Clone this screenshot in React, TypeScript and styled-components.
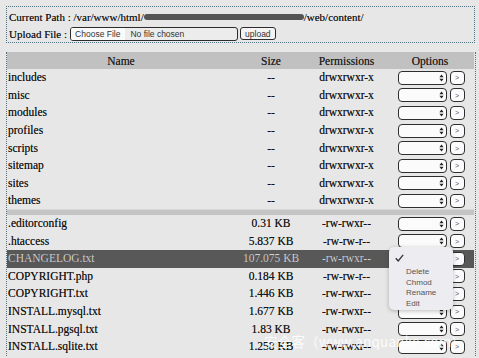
import React from "react";
import styled, { createGlobalStyle } from "styled-components";

const GlobalStyle = createGlobalStyle`
  html, body {
    margin: 0;
    padding: 0;
    background: #e7e7e7;
  }
  body {
    font-family: "Liberation Serif", "Times New Roman", serif;
    font-size: 11.5px;
    color: #141414;
  }
`;

interface Entry {
  name: string;
  size: string;
  perms: string;
}

const dirs: Entry[] = [
  "includes",
  "misc",
  "modules",
  "profiles",
  "scripts",
  "sitemap",
  "sites",
  "themes",
].map((name) => ({ name, size: "--", perms: "drwxrwxr-x" }));

const files: Entry[] = [
  { name: ".editorconfig", size: "0.31 KB", perms: "-rw-rwxr--" },
  { name: ".htaccess", size: "5.837 KB", perms: "-rw-rw-r--" },
  { name: "CHANGELOG.txt", size: "107.075 KB", perms: "-rw-rwxr--" },
  { name: "COPYRIGHT.php", size: "0.184 KB", perms: "-rw-rw-r--" },
  { name: "COPYRIGHT.txt", size: "1.446 KB", perms: "-rw-rwxr--" },
  { name: "INSTALL.mysql.txt", size: "1.677 KB", perms: "-rw-rwxr--" },
  { name: "INSTALL.pgsql.txt", size: "1.83 KB", perms: "-rw-rwxr--" },
  { name: "INSTALL.sqlite.txt", size: "1.258 KB", perms: "-rw-rwxr--" },
];

const Page = styled.div`
  position: relative;
  height: 358px;
  overflow: hidden;
  padding: 6px 4px 0 6px;
  box-sizing: border-box;
  text-shadow: 0 0 0.5px rgba(0, 0, 0, 0.6);
`;

const InfoBox = styled.div`
  border: 1px dotted #4f7282;
  padding: 1px 2px 0;
  height: 34px;
  margin-bottom: 9px;
  font-size: 11px;
`;

const InfoLine = styled.div`
  display: flex;
  align-items: center;
  height: 17px;
  white-space: nowrap;
`;

const Redacted = styled.span`
  display: inline-block;
  width: 160px;
  height: 6px;
  border-radius: 3px;
  background: #555;
  filter: blur(0.6px);
`;

const FileInput = styled.span`
  display: inline-flex;
  align-items: center;
  width: 166px;
  height: 12px;
  margin-left: 3px;
  border: 1px solid #2d2d2d;
  border-radius: 3px;
  background: #ececec;
  font-family: "Liberation Sans", Arial, sans-serif;
  font-size: 8.5px;
  color: #333;
  text-shadow: none;
  overflow: hidden;
`;

const ChooseButton = styled.span`
  background: #fafafa;
  height: 100%;
  display: flex;
  align-items: center;
  padding: 0 5px 0 4px;
  margin-right: 5px;
`;

const SmallButton = styled.button`
  height: 13px;
  padding: 0 4px;
  margin-left: 2px;
  border: 1px solid #2d2d2d;
  border-radius: 3px;
  background: #f4f4f4;
  font-family: "Liberation Sans", Arial, sans-serif;
  font-size: 8.5px;
  color: #333;
  line-height: 10px;
`;

const Frame = styled.div`
  border-left: 1px dotted #5a6f78;
  border-right: 1px dotted #5a6f78;
  width: 467px;
  padding-right: 1px;
`;

const Table = styled.table`
  width: 467px;
  border-collapse: collapse;
  table-layout: fixed;
`;

const Th = styled.th<{ $w: number }>`
  width: ${(p) => p.$w}px;
  background: #c1c1c1;
  height: 17px;
  padding: 0;
  font-weight: normal;
  color: #1e1e1e;
`;

const Row = styled.tr<{ $active?: boolean }>`
  height: 17.6px;
  background: ${(p) => (p.$active ? "#585858" : "transparent")};
  color: ${(p) => (p.$active ? "#d4d4d4" : "#141414")};
`;

const Cell = styled.td<{ $align?: string }>`
  padding: 0 1px;
  text-align: ${(p) => p.$align || "left"};
  white-space: nowrap;
  line-height: 17px;
`;

const Divider = styled.tr`
  height: 5px;
  background: #c4c4c4;
  td {
    padding: 0;
    border-top: 1px solid #d8d8d8;
  }
`;

const Options = styled.div`
  display: flex;
  align-items: center;
  justify-content: center;
  gap: 3px;
  padding-left: 2px;
`;

const Select = styled.span`
  width: 45px;
  height: 12px;
  border: 1px solid #2e2e2e;
  border-radius: 4px;
  background: #fbfbfb;
  display: flex;
  align-items: center;
  justify-content: flex-end;
  padding-right: 2px;
  box-sizing: content-box;
`;

const Go = styled.span`
  width: 13px;
  height: 12px;
  border: 1px solid #2e2e2e;
  border-radius: 4px;
  background: #fbfbfb;
  font-family: "Liberation Sans", Arial, sans-serif;
  font-size: 7px;
  color: #555;
  text-shadow: none;
  display: flex;
  align-items: center;
  justify-content: center;
`;

const Menu = styled.div`
  position: absolute;
  left: 389px;
  top: 247px;
  width: 64px;
  height: 63px;
  box-sizing: border-box;
  padding: 7px 0 0 6px;
  background: #ececf1;
  border-radius: 5px;
  box-shadow: 0 1px 4px rgba(0, 0, 0, 0.25);
  font-family: "Liberation Sans", Arial, sans-serif;
  font-size: 8px;
  color: #555;
  text-shadow: none;
`;

const MenuItem = styled.div`
  padding-left: 11px;
  line-height: 10.7px;
`;

const Watermark = styled.div`
  position: absolute;
  left: 264px;
  top: 331px;
  font-family: "Noto Sans CJK SC", "Noto Sans", sans-serif;
  font-size: 13.5px;
  letter-spacing: 0.2px;
  color: rgba(255, 255, 255, 0.88);
  text-shadow: none;
  white-space: nowrap;
`;

function Arrows() {
  return (
    <svg width="5" height="8" viewBox="0 0 5 8">
      <path d="M2.5 0.5 L4.6 3.2 H0.4 Z M2.5 7.5 L4.6 4.8 H0.4 Z" fill="#222" />
    </svg>
  );
}

function Check() {
  return (
    <svg width="9" height="8" viewBox="0 0 9 8">
      <path d="M0.8 4.3 L3.2 7 L8.2 0.8" fill="none" stroke="#333" strokeWidth="1.3" />
    </svg>
  );
}

function EntryRow({ entry, active }: { entry: Entry; active?: boolean }) {
  return (
    <Row $active={active}>
      <Cell>{entry.name}</Cell>
      <Cell $align="center">{entry.size}</Cell>
      <Cell $align="center">{entry.perms}</Cell>
      <Cell>
        <Options>
          <Select>
            <Arrows />
          </Select>
          <Go>&gt;</Go>
        </Options>
      </Cell>
    </Row>
  );
}

export default function App(): JSX.Element {
  return (
    <>
      <GlobalStyle />
      <Page>
        <InfoBox>
          <InfoLine>
            Current Path : /var/www/html/<Redacted />/web/content/
          </InfoLine>
          <InfoLine>
            Upload File :
            <FileInput>
              <ChooseButton>Choose File</ChooseButton>
              No file chosen
            </FileInput>
            <SmallButton>upload</SmallButton>
          </InfoLine>
        </InfoBox>
        <Frame>
          <Table>
            <thead>
              <tr>
                <Th $w={228}>Name</Th>
                <Th $w={72}>Size</Th>
                <Th $w={79}>Permissions</Th>
                <Th $w={88}>Options</Th>
              </tr>
            </thead>
            <tbody>
              {dirs.map((d) => (
                <EntryRow key={d.name} entry={d} />
              ))}
              <Divider>
                <td colSpan={4} />
              </Divider>
              {files.map((f) => (
                <EntryRow key={f.name} entry={f} active={f.name === "CHANGELOG.txt"} />
              ))}
            </tbody>
          </Table>
        </Frame>
        <Menu>
          <Check />
          <div style={{ height: 3 }} />
          <MenuItem>Delete</MenuItem>
          <MenuItem>Chmod</MenuItem>
          <MenuItem>Rename</MenuItem>
          <MenuItem>Edit</MenuItem>
        </Menu>
        <Watermark>安全客（www.anquanke.com）</Watermark>
      </Page>
    </>
  );
}
